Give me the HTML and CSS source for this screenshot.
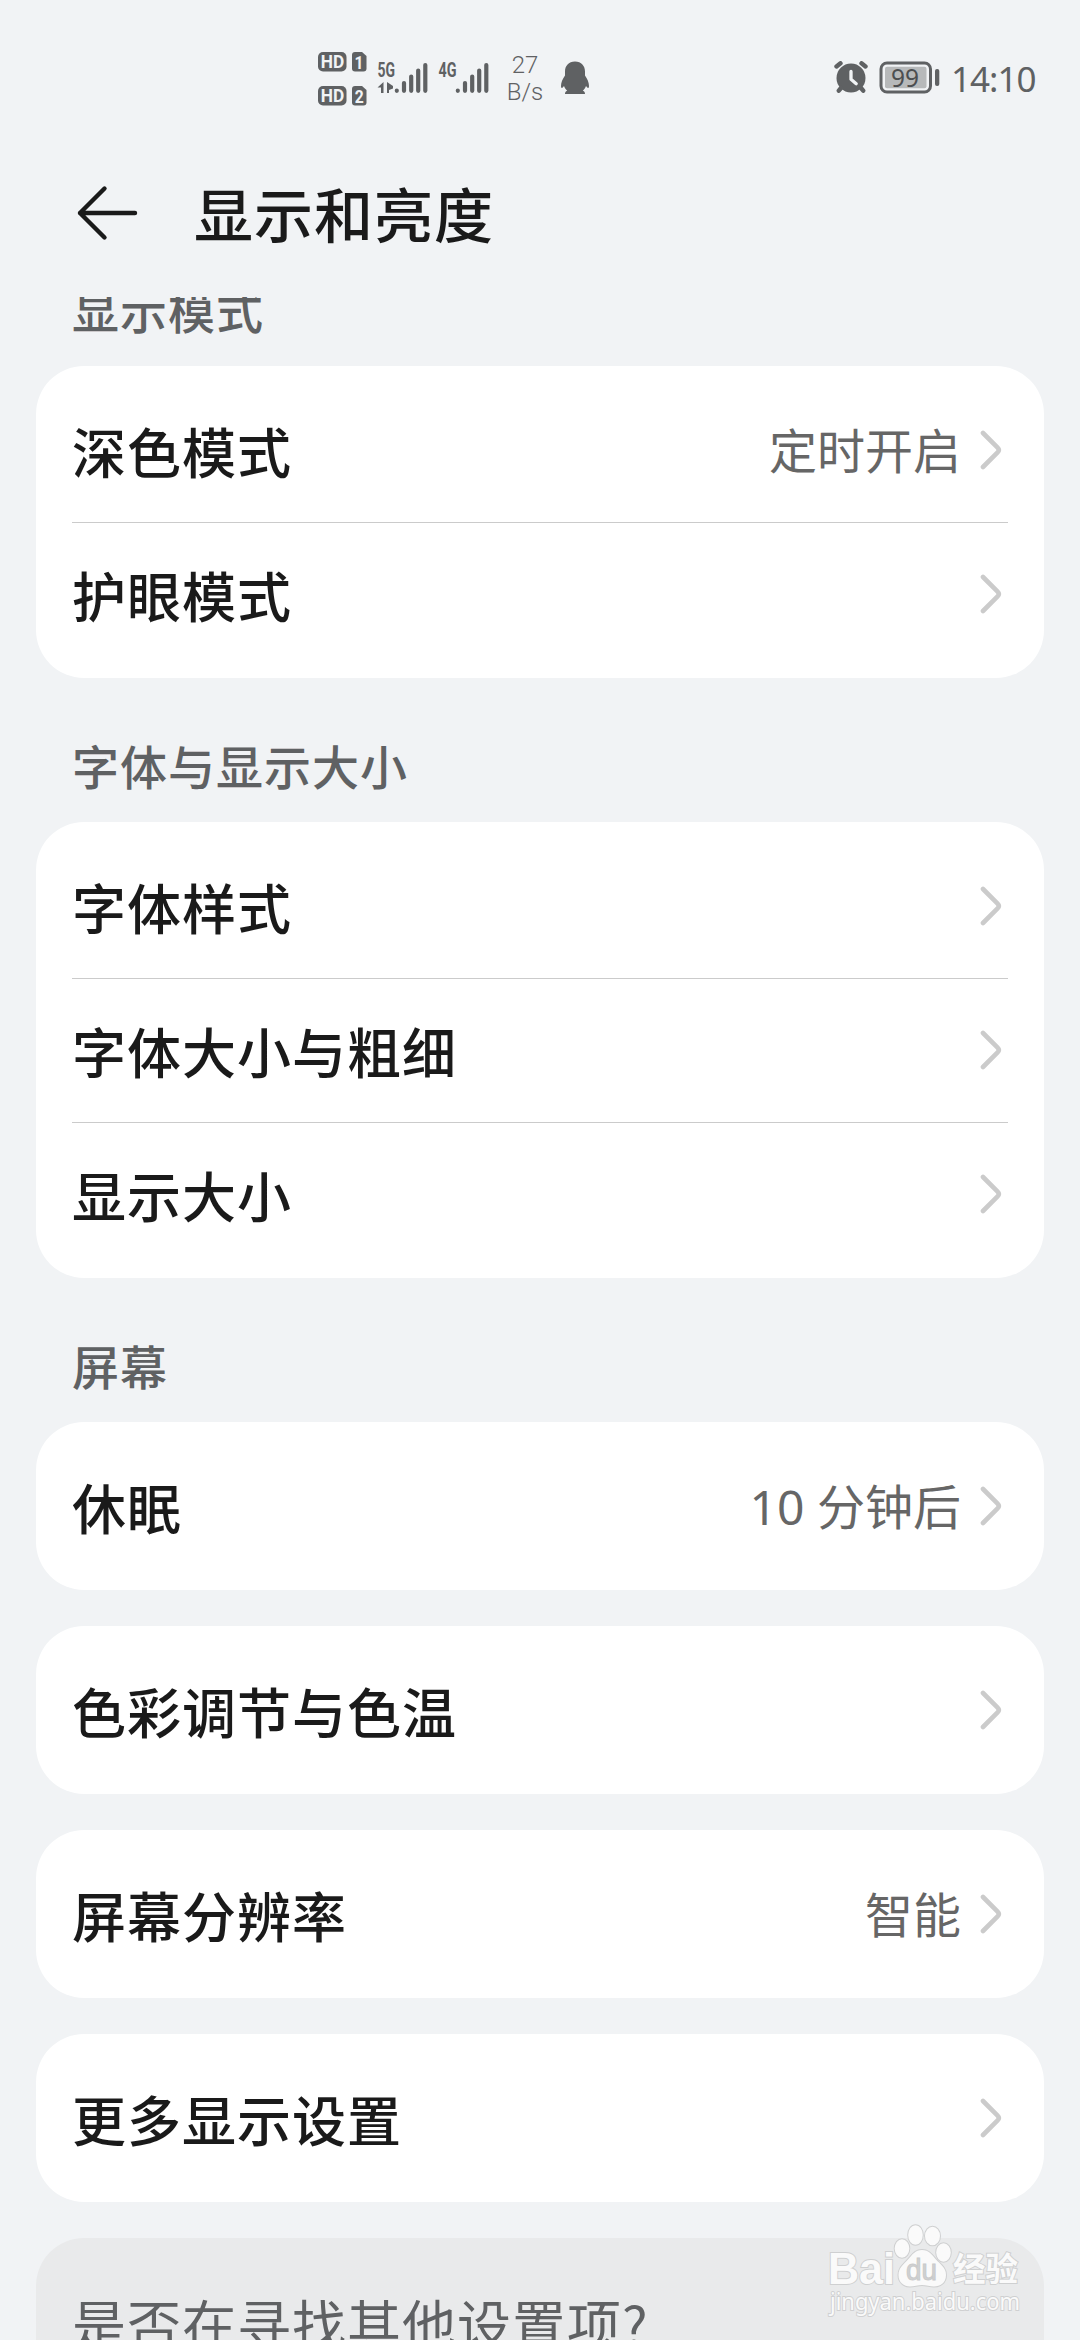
FILE: index.html
```html
<!DOCTYPE html>
<html lang="zh-CN">
<head>
<meta charset="utf-8">
<title>显示和亮度</title>
<link rel="stylesheet" href="styles.css">
</head>
<body>
<svg class="defs" width="0" height="0">
  <symbol id="chevron" viewBox="0 0 24 42"><path d="M4 4 L18.6 18.6 Q21 21 18.6 23.4 L4 38" fill="none" stroke="#cbcbcb" stroke-width="4.6" stroke-linecap="round"/></symbol>
</svg>
<div class="screen">
  <header class="status">
    <svg class="status-left" width="190" height="60" viewBox="310 48 190 60">
      <g fill="#5f6163">
        <rect x="318" y="52" width="28.5" height="19.5" rx="5"/>
        <path d="M355 52h7l4.500 4v12.500a3 3 0 0 1-3 3h-8.500a3 3 0 0 1-3-3v-13.500a3 3 0 0 1 3-3z"/>
        <rect x="318" y="86" width="28.500" height="19.500" rx="5"/>
        <path d="M355 86h7l4.500 4v12.500a3 3 0 0 1-3 3h-8.500a3 3 0 0 1-3-3v-13.500a3 3 0 0 1 3-3z"/>
      </g>
      <g class="badge">
        <text x="320.800" y="68.300" textLength="23.500" lengthAdjust="spacingAndGlyphs">HD</text>
        <text x="354.500" y="68.600" textLength="9" lengthAdjust="spacingAndGlyphs">1</text>
        <text x="320.800" y="102.300" textLength="23.500" lengthAdjust="spacingAndGlyphs">HD</text>
        <text x="354.800" y="102.600" textLength="9" lengthAdjust="spacingAndGlyphs">2</text>
      </g>
      <g class="net">
        <text x="377.500" y="76.500" textLength="17.500" lengthAdjust="spacingAndGlyphs">5G</text>
        <text x="438.500" y="76.500" textLength="18" lengthAdjust="spacingAndGlyphs">4G</text>
      </g>
      <path fill="#5f6163" d="M383.500 82v11h-2.500v-5.500h-3.500zM387 82l0 11h2v-3l4-1.500v-2.500l-3-2z"/>
      <g stroke="#5f6163" stroke-width="4.200" stroke-linecap="round">
        <path d="M396.800 90.700v.1M404 83v7.800M411.200 76.500v14.300M418.200 70.500v20.300M425.300 65v25.800"/>
        <path d="M457.800 90.700v.1M465 83v7.800M472.200 76.500v14.300M479.200 70.500v20.300M486.300 65v25.800"/>
      </g>
    </svg>
    <div class="speed"><span>27</span><span>B/s</span></div>
    <svg class="qq" width="30" height="34" viewBox="0 0 30 34"><path fill="#5f6163" d="M15 0.500C8.500 0.500 5 5 5 10.500v4C2.500 18 1 21.500 1 25c0 2.500 1.300 2.500 3 0 .8 2 1.900 3.500 3.200 4.800C5.500 30.300 5 31.500 5 33h9.500h1H25c0-1.500-.5-2.700-2.200-3.200C24.100 28.500 25.200 27 26 25c1.700 2.500 3 2.500 3 0 0-3.500-1.500-7-4-10.500v-4C25 5 21.500.5 15 .5z"/></svg>
    <svg class="alarm" width="36" height="34" viewBox="833 62 36 34">
      <circle cx="851" cy="79" r="14.500" fill="#5f6163"/>
      <path d="M836.500 67.500l4-3.200M865.500 67.500l-4-3.200M841 89l-2.200 2.700M861 89l2.200 2.700" stroke="#5f6163" stroke-width="4.400" stroke-linecap="round"/>
      <path d="M851 72.500v7.800l5.200 4.400" fill="none" stroke="#f1f3f5" stroke-width="3.300" stroke-linecap="round" stroke-linejoin="round"/>
    </svg>
    <svg class="battery" width="62" height="34" viewBox="879 62 62 34">
      <rect x="881" y="64" width="49.500" height="29" rx="6" fill="none" stroke="#5f6163" stroke-width="3"/>
      <rect x="885" y="67.800" width="41.500" height="21.400" rx="2" fill="#b7b9ba"/>
      <text class="level" x="891" y="87.500" textLength="28" lengthAdjust="spacingAndGlyphs">99</text>
      <rect x="935" y="70" width="4.300" height="17" rx="2" fill="#5f6163"/>
    </svg>
    <span class="clock">14:10</span>
  </header>

  <div class="titlebar">
    <svg width="64" height="60" viewBox="0 0 64 60"><path d="M60 30H5M29.500 5.500L5 30l24.500 24.500" fill="none" stroke="#1a1a1a" stroke-width="4.400" stroke-linecap="round" stroke-linejoin="round"/></svg>
    <h1>显示和亮度</h1>
  </div>

  <main class="list">
    <h2 class="label label-first">显示模式</h2>
    <section class="card">
      <div class="row"><span class="name">深色模式</span><span class="value">定时开启</span><svg class="chev"><use href="#chevron"/></svg></div>
      <div class="row"><span class="name">护眼模式</span><svg class="chev"><use href="#chevron"/></svg></div>
    </section>
    <h2 class="label">字体与显示大小</h2>
    <section class="card">
      <div class="row"><span class="name">字体样式</span><svg class="chev"><use href="#chevron"/></svg></div>
      <div class="row"><span class="name">字体大小与粗细</span><svg class="chev"><use href="#chevron"/></svg></div>
      <div class="row"><span class="name">显示大小</span><svg class="chev"><use href="#chevron"/></svg></div>
    </section>
    <h2 class="label">屏幕</h2>
    <div class="stack">
      <section class="card"><div class="row"><span class="name">休眠</span><span class="value">10 分钟后</span><svg class="chev"><use href="#chevron"/></svg></div></section>
      <section class="card"><div class="row"><span class="name">色彩调节与色温</span><svg class="chev"><use href="#chevron"/></svg></div></section>
      <section class="card"><div class="row"><span class="name">屏幕分辨率</span><span class="value">智能</span><svg class="chev"><use href="#chevron"/></svg></div></section>
      <section class="card"><div class="row"><span class="name">更多显示设置</span><svg class="chev"><use href="#chevron"/></svg></div></section>
      <section class="card hint">是否在寻找其他设置项?</section>
    </div>
  </main>

  <svg class="watermark" width="204" height="100" viewBox="824 2220 204 100">
    <g fill="#fafafa" stroke="#cfd0d1" stroke-width="2" paint-order="stroke">
      <text class="wm-bai" x="828" y="2284" textLength="67" lengthAdjust="spacingAndGlyphs">Bai</text>
      <ellipse cx="902" cy="2248.500" rx="7.300" ry="9.300"/>
      <ellipse cx="915.500" cy="2235" rx="7.300" ry="9.800"/>
      <ellipse cx="932.500" cy="2236" rx="7.500" ry="9.300"/>
      <ellipse cx="943.500" cy="2252.500" rx="7.300" ry="9.300"/>
      <path d="M922 2250c7 0 10 5 14 9.500s10 8 10 15.500c0 8-6 11.500-12 11.500-4 0-8-1.500-12-1.500s-8 1.500-12 1.500c-6 0-11.500-4-11.500-11.500 0-7 5-10.500 9.500-15.500s7-9.500 14-9.500z"/>
      <text class="wm-cn" x="953" y="2281" textLength="65" lengthAdjust="spacingAndGlyphs">经验</text>
      <text class="wm-url" x="830" y="2310" textLength="190" lengthAdjust="spacingAndGlyphs">jingyan.baidu.com</text>
    </g>
    <text class="wm-du" x="906" y="2280" textLength="31" lengthAdjust="spacingAndGlyphs">du</text>
  </svg>
</div>
</body>
</html>
```
FILE: styles.css
```css
* { box-sizing: border-box; margin: 0; }
html, body { height: 100%; overflow: hidden; }
.defs { display: block; height: 0; }

.screen {
  position: relative;
  display: flex;
  flex-direction: column;
  width: 1080px;
  height: 2340px;
  overflow: hidden;
  background: #f1f3f5;
  color: #1a1a1a;
  font-family: "Noto Sans CJK SC", sans-serif;
}

/* status bar */
.status {
  display: flex;
  align-items: center;
  flex: none;
  height: 156px;
  padding: 0 43px 0 310px;
  color: #5f6163;
}
.speed {
  display: flex;
  flex-direction: column;
  align-items: center;
  width: 50px;
  padding-top: 1px;
  font: 300 24px/27px Roboto, sans-serif;
}
.qq { margin-left: 10px; }
.alarm { margin-left: auto; }
.battery { margin-left: 10px; }
.clock {
  width: 86px;
  margin-left: 10px;
  padding-top: 2px;
  font: 400 35px/40px "Noto Sans", sans-serif;
  letter-spacing: -1px;
  white-space: nowrap;
}
.badge text { font: 700 18px Roboto, sans-serif; fill: #f1f3f5; }
.net text { font: 700 20px Roboto, sans-serif; fill: #5f6163; }
.level { font: 400 26px "Noto Sans", sans-serif; fill: #4c4e50; }

/* title bar */
.titlebar {
  display: flex;
  align-items: center;
  flex: none;
  height: 141px;
  padding: 0 75px 28px;
}
.titlebar h1 {
  margin-left: 55px;
  font-size: 59px;
  font-weight: 500;
  line-height: 80px;
  letter-spacing: 1px;
}

/* settings list */
.list {
  flex: 1;
  min-height: 0;
  overflow: hidden;
  padding: 0 36px;
}
.label {
  height: 144px;
  padding: 52px 36px 0;
  font-size: 47px;
  font-weight: 500;
  line-height: 70px;
  letter-spacing: 1px;
  color: #5f6163;
}
.label-first { margin-top: -75px; }
.card {
  padding: 12px 36px;
  border-radius: 48px;
  background: #fff;
}
.row {
  display: flex;
  align-items: center;
  height: 144px;
}
.row + .row { border-top: 1px solid #cbcbcb; }
.name {
  flex: 1;
  padding-top: 1px;
  font-size: 54px;
  font-weight: 500;
  line-height: 80px;
  letter-spacing: 1px;
}
.value {
  margin-right: 18px;
  padding-top: 2px;
  font-family: "Noto Sans", "Noto Sans CJK SC", sans-serif;
  font-size: 48px;
  line-height: 70px;
  color: #666;
}
.chev { width: 24px; height: 42px; margin-right: 5px; }
.row + .row .chev { margin-bottom: 1px; }
.stack { display: flex; flex-direction: column; gap: 36px; }
.hint {
  height: 168px;
  padding: 45px 36px 0;
  background: #e9eaeb;
  color: #5f6163;
  font-size: 54px;
  line-height: 80px;
  letter-spacing: 1px;
}

/* watermark */
.watermark { position: absolute; left: 824px; top: 2220px; }
.wm-bai { font: 700 44px "Liberation Sans", sans-serif; }
.wm-cn { font: 700 33px "Noto Sans CJK SC", sans-serif; }
.wm-url { font: 400 24px "Noto Sans", sans-serif; }
.wm-du { font: 400 30px "Liberation Sans", sans-serif; fill: #d0d1d2; stroke: #c9cacb; stroke-width: 1; }
```
